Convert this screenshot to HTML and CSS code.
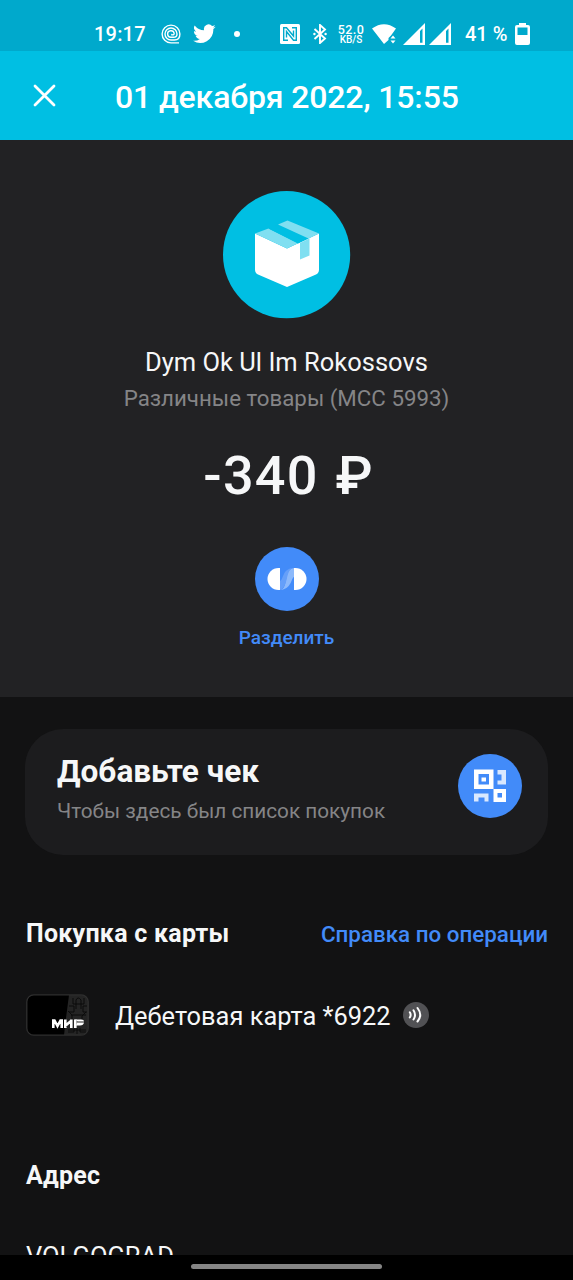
FILE: index.html
```html
<!DOCTYPE html>
<html lang="ru">
<head>
<meta charset="utf-8">
<meta name="viewport" content="width=device-width">
<title>Операция</title>
<link rel="stylesheet" href="styles.css">
</head>
<body>
<div class="screen">
  <div class="status">
    <span class="time">19:17</span>
    <svg class="spiral" width="20" height="20" viewBox="0 0 20 20"><path d="M18 18.900H10A8.900 8.900 0 1 1 18.900 10C18.900 14 16.500 16 13.500 16H10A6 6 0 1 1 16 10C16 12.500 14.500 13.300 12.500 13.300H10A3.300 3.300 0 1 1 13.200 9.500Q13 11.500 10.200 10.500"/></svg>
    <svg class="bird" width="23" height="20" viewBox="0 0 24 20"><path d="M23.600 2.400a9.500 9.500 0 0 1-2.800.8A4.800 4.800 0 0 0 22.900.5a9.700 9.700 0 0 1-3 1.200 4.800 4.800 0 0 0-8.300 4.400A13.700 13.700 0 0 1 1.700 1a4.800 4.800 0 0 0 1.500 6.500 4.800 4.800 0 0 1-2.200-.6 4.800 4.800 0 0 0 3.900 4.800 4.800 4.800 0 0 1-2.200.1 4.800 4.800 0 0 0 4.500 3.300A9.700 9.700 0 0 1 .1 17.100a13.700 13.700 0 0 0 21.100-12.200c.9-.7 1.800-1.500 2.400-2.500z"/></svg>
    <span class="dot"></span>
    <svg class="nfc" width="20" height="20" viewBox="0 0 20 20"><rect width="20" height="20" rx="1.500" fill="#fff"/><path d="M8 16.300H3.700V3.700H6.500L13.500 12V6.500M6.500 13.500V7.500L13.500 16.300H16.300V3.700H12" fill="none" stroke="#00a9cc" stroke-width="1.400"/></svg>
    <svg class="bt" width="14" height="20" viewBox="0 0 14 20"><path d="M1.500 5L12 14.500L7 19V1L12 5.500L1.500 15" fill="none" stroke="#fff" stroke-width="1.900"/><circle cx="1.400" cy="10" r="1.200" fill="#fff"/><circle cx="12.600" cy="10" r="1.200" fill="#fff"/></svg>
    <span class="speed"><span class="rate">52.0</span><span class="unit">KB/S</span></span>
    <svg class="wifi" width="25" height="20" viewBox="0 0 25 20"><path d="M0 4.500Q12-4 24 4.500L19 11.500L16.500 14V16L12 20Z"/><path d="M18.500 14.500L21 11.500 23.500 14.500ZM18.500 16.500L21 19.500 23.500 16.500Z"/></svg>
    <svg class="signal" width="22" height="22" viewBox="0 0 22 22"><path fill-rule="evenodd" d="M0 22L22 0V22ZM17 8V19.800H19.500V5.500Z"/></svg>
    <svg class="signal signal-two" width="22" height="22" viewBox="0 0 22 22"><path fill-rule="evenodd" d="M0 22L22 0V22ZM17 8V19.800H19.500V5.500Z"/></svg>
    <span class="percent">41 %</span>
    <svg class="battery" width="15" height="22" viewBox="0 0 15 22"><path fill-rule="evenodd" d="M4 0H11V2H13Q15 2 15 4V20Q15 22 13 22H2Q0 22 0 20V4Q0 2 2 2H4ZM2.500 4.500V12H12.500V4.500Z"/></svg>
  </div>
  <header class="header">
    <svg class="close" width="23" height="23" viewBox="0 0 23 23"><path d="M2 2L21 21M21 2L2 21"/></svg>
    <h1 class="date">01 декабря 2022, 15:55</h1>
  </header>
  <section class="hero">
    <svg class="category" width="128" height="128" viewBox="0 0 128 128">
      <circle cx="63.600" cy="63.700" r="63.600" fill="#00bfe3"/>
      <path d="M32 42.500L64 57.500 96 42.500V78.500Q96 82 93 83.500L64 96 35 83.500Q32 82 32 78.500Z" fill="#fff"/>
      <path d="M32 42.500L45.500 37.500 75 52.200 64 57.500Z" fill="#80dff1"/>
      <path d="M45.500 37.500L55 33.500 85.500 47.500 75 52.500Z" fill="#00bfe3"/>
      <path d="M55 33.500L64.500 29.500 96 42.500 85.500 47.500Z" fill="#80dff1"/>
      <path d="M77 52L86.500 47.300V64.500L77 68.500Z" fill="#80dff1"/>
    </svg>
    <div class="merchant">Dym Ok Ul Im Rokossovs</div>
    <div class="mcc">Различные товары (MCC 5993)</div>
    <div class="amount"><span class="value">-340</span><span class="currency">₽</span></div>
    <svg class="split" width="64" height="64" viewBox="0 0 64 64">
      <circle cx="32" cy="32" r="32" fill="#428bf9"/>
      <path d="M25 21V43H23.500A11 11 0 0 1 23.500 21Z" fill="#fff"/>
      <path d="M39 21V43H40.500A11 11 0 0 0 40.500 21Z" fill="#fff"/>
      <path d="M25 43C34 42 28 22 39 21V30C36 31 37 42 25 43Z" fill="#8cb9fb"/>
      <path d="M25 34C29 32 27 22 38 21C30 23 34 40 25 43Z" fill="#659ff9"/>
    </svg>
    <div class="split-label">Разделить</div>
  </section>
  <main class="details">
    <section class="receipt">
      <div>
        <h2 class="receipt-title">Добавьте чек</h2>
        <p class="receipt-text">Чтобы здесь был список покупок</p>
      </div>
      <svg class="qr" width="64" height="64" viewBox="0 0 64 64">
        <circle cx="32" cy="32" r="32" fill="#428bf9"/>
        <path fill="#fff" fill-rule="evenodd" d="M16 15.500H35.500V35H16ZM20.500 20V30.500H31V20ZM23.500 23.500H28V27.500H23.500ZM35.500 35H48V48H35.500ZM39.500 39V43.500H44V39Z"/>
        <path fill="#d9e8fe" d="M39.500 16H48V30.500H39.500V26.500H43.500V20.500H39.500ZM16 39.500H30.500V47.500H26.500V43.500H20.500V47.500H16Z"/>
      </svg>
    </section>
    <div class="operation">
      <h3 class="heading purchase">Покупка с карты</h3>
      <span class="link">Справка по операции</span>
    </div>
    <div class="account">
      <svg class="card" width="63" height="42" viewBox="0 0 63 42">
        <rect x=".8" y=".8" width="61.400" height="40.400" rx="7" fill="#000"/>
        <path d="M43 1H55Q62 1 62 8V34Q62 41 55 41H38L40 24Z" fill="#242424"/>
        <g fill="none" stroke="#0b0b0b" stroke-width="1"><path d="M47 4V10H58V4M50 15V6Q52 2 55 6V15M43 12H48V18H43M61 12H57V18H61M45 21H60M42 17L46 21V25M60 18L56 22V25M42 36H60M42 38H48V34M60 38H54V34M51 34V40"/></g>
        <rect x=".8" y=".8" width="61.400" height="40.400" rx="7" fill="none" stroke="#2f2f2f" stroke-width="1.300"/>
        <g fill="none" stroke="#fff" stroke-width="2.600"><path d="M27.300 34V26.500H28.500L31.500 32 34.500 26.500H35.700V34M39.300 25.500V34M39 32L45 27M45.300 25.500V34M49.300 25.500V34"/></g>
        <path d="M48 25.500H55Q58 25.500 58 27.500H51.500L50 26ZM51 28.500H58Q57.500 31.500 54 31.500H50Z" fill="#fff"/>
      </svg>
      <span class="account-name">Дебетовая карта *6922</span>
      <svg class="contactless" width="26" height="26" viewBox="0 0 26 26"><circle cx="13" cy="13" r="13" fill="#515154" stroke="none"/><path d="M6.800 10.300Q8.500 13 6.800 15.500M10.500 8.300Q13.500 13 10.500 17.500M14.500 6Q20 13 14.500 19.500"/></svg>
    </div>
    <h3 class="heading address">Адрес</h3>
    <div class="city">VOLGOGRAD</div>
  </main>
  <div class="navbar"><span class="handle"></span></div>
</div>
</body>
</html>
```

FILE: styles.css
```css
* { box-sizing: border-box; }
body { margin: 0; background: #000; }
h1, h2, h3, p { margin: 0; }
svg { display: block; flex: none; }
.screen {
  width: 573px;
  height: 1280px;
  display: flex;
  flex-direction: column;
  overflow: hidden;
  font-family: Roboto, "Noto Sans", sans-serif;
  color: #f6f7f8;
  white-space: nowrap;
}
.status {
  flex: none;
  display: flex;
  align-items: center;
  height: 51px;
  padding: 17px 0 0 94px;
  background: #00a9cc;
  color: #fff;
  fill: #fff;
}
.time { width: 67px; font-size: 20px; font-weight: 500; letter-spacing: 0.200px; }
.spiral { fill: none; stroke: #fff; stroke-width: 1.400; }
.bird { margin-left: 12px; }
.dot { width: 6px; height: 6px; margin: 0 40px 0 18px; border-radius: 50%; background: #fff; }
.bt { margin-left: 13px; }
.speed { display: flex; flex-direction: column; align-items: center; width: 28px; margin: 0 7px 0 10px; font-weight: 500; }
.rate { font-size: 12.500px; line-height: 11px; letter-spacing: 0.400px; }
.unit { font-size: 10px; line-height: 10px; }
.signal { margin-left: 6px; }
.signal-two { margin-left: 4px; }
.percent { width: 50px; margin-left: 14px; font-size: 20px; font-weight: 500; }
.header { flex: none; display: flex; align-items: center; height: 89px; padding: 0 0 0 33px; background: #00bfe3; color: #fff; }
.close { fill: none; stroke: #fff; stroke-width: 2.800; stroke-linecap: round; }
.date { margin: 2px 0 0 59px; font-size: 32px; line-height: 38px; font-weight: 500; letter-spacing: -0.130px; }
.hero { flex: none; display: flex; flex-direction: column; align-items: center; height: 557px; padding-top: 51px; background: #222224; }
.merchant { margin-top: 28px; font-size: 25.500px; line-height: 30px; }
.mcc { margin-top: 7px; font-size: 22.300px; line-height: 28px; color: #858587; }
.amount { display: flex; gap: 17px; margin: 32px 0 0 3px; font-size: 54px; line-height: 64px; font-weight: 500; }
.value { letter-spacing: 1.200px; }
.split { margin-top: 39px; }
.split-label { margin-top: 15px; font-size: 19px; line-height: 24px; font-weight: 500; color: #428bf9; }
.details { flex: none; height: 558px; padding: 32px 25px 0; overflow: hidden; background: #121213; }
.receipt { display: flex; justify-content: space-between; height: 126px; padding: 25px 26px 0 32px; border-radius: 38px; background: #1c1c1e; }
.receipt-title { font-size: 31.600px; line-height: 36px; font-weight: 700; }
.receipt-text { margin-top: 8px; font-size: 20.750px; line-height: 26px; color: #858587; }
.operation { display: flex; justify-content: space-between; align-items: center; margin-top: 64px; }
.heading { padding-left: 1px; font-size: 25px; line-height: 30px; font-weight: 700; letter-spacing: 0.250px; }
.link { font-size: 22.400px; line-height: 30px; font-weight: 500; color: #428bf9; }
.account { display: flex; align-items: center; height: 42px; margin: 45px 0 0 1px; }
.account-name { margin: 2px 0 0 26px; font-size: 25.400px; line-height: 32px; }
.contactless { margin-left: 12px; fill: none; stroke: #fff; stroke-width: 2; stroke-linecap: round; }
.address { margin-top: 125px; }
.city { margin-top: 49px; padding-left: 1px; font-size: 25.500px; line-height: 32px; }
.navbar { flex: none; display: flex; justify-content: center; height: 25px; padding-top: 9px; background: #000; }
.handle { width: 191px; height: 5px; border-radius: 3px; background: #858585; }
```
